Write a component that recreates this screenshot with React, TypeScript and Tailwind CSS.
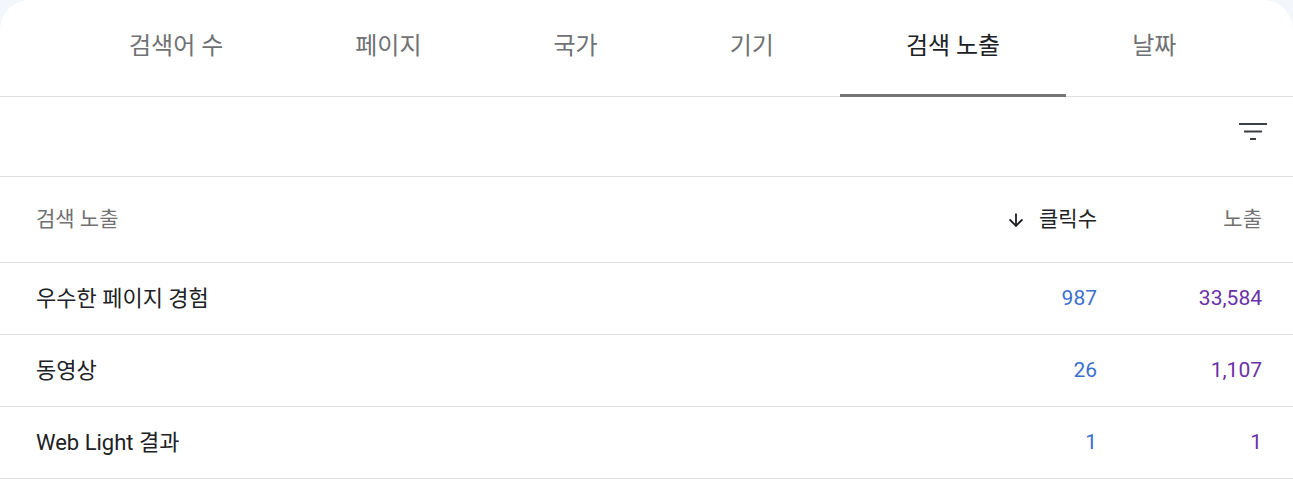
import React from 'react';
import { ArrowDown } from 'lucide-react';

const tabs = ['검색어 수', '페이지', '국가', '기기', '검색 노출', '날짜'];
const activeTab = 4;

const rows = [
  { name: '우수한 페이지 경험', clicks: '987', impressions: '33,584' },
  { name: '동영상', clicks: '26', impressions: '1,107' },
  { name: 'Web Light 결과', clicks: '1', impressions: '1' },
];

const FilterIcon = () => (
  <svg width="28" height="18" viewBox="0 0 28 18" fill="#3c4043">
    <rect x="0" y="0" width="28" height="2" />
    <rect x="5" y="7.5" width="18" height="2" />
    <rect x="11" y="15" width="6" height="2" />
  </svg>
);

const App: React.FC = () => {
  return (
    <div className="w-[1293px] h-[480px] bg-[#f3f6fa] font-['Roboto','Noto_Sans_CJK_KR',sans-serif]">
      <div className="h-full bg-white rounded-t-[30px] overflow-hidden">
        {/* Tabs */}
        <div className="flex h-[97px] pl-[63px] border-b border-[#e0e0e0]">
          {tabs.map((tab, i) => (
            <div
              key={tab}
              className={`relative flex items-center px-[66px] pb-[4px] text-[24px] ${
                i === activeTab ? 'text-[#202124]' : 'text-[#6f7175]'
              }`}
            >
              {tab}
              {i === activeTab && (
                <span className="absolute left-0 right-0 bottom-[-1px] h-[3px] bg-[#757575]" />
              )}
            </div>
          ))}
        </div>

        {/* Filter bar */}
        <div className="flex h-[80px] items-center justify-end pr-[26px] pb-[9px] border-b border-[#e0e0e0]">
          <FilterIcon />
        </div>

        {/* Table header */}
        <div className="flex h-[86px] items-center pl-[36px] pr-[31px] border-b border-[#e0e0e0] text-[21px]">
          <div className="flex-1 text-[#707070]">검색 노출</div>
          <div className="w-[200px] flex items-center justify-end gap-[13px] text-[#202124]">
            <ArrowDown size={20} strokeWidth={2.2} />
            <span>클릭수</span>
          </div>
          <div className="w-[165px] text-right text-[#707070]">노출</div>
        </div>

        {/* Rows */}
        {rows.map((row) => (
          <div
            key={row.name}
            className="flex h-[72px] items-center pl-[36px] pr-[31px] border-b border-[#e0e0e0] text-[21px]"
          >
            <div className="flex-1 text-[22px] text-[#202124]">{row.name}</div>
            <div className="w-[200px] text-right text-[#3b6fcf]">{row.clicks}</div>
            <div className="w-[165px] text-right text-[#6a32a6]">{row.impressions}</div>
          </div>
        ))}
      </div>
    </div>
  );
};

export default App;
